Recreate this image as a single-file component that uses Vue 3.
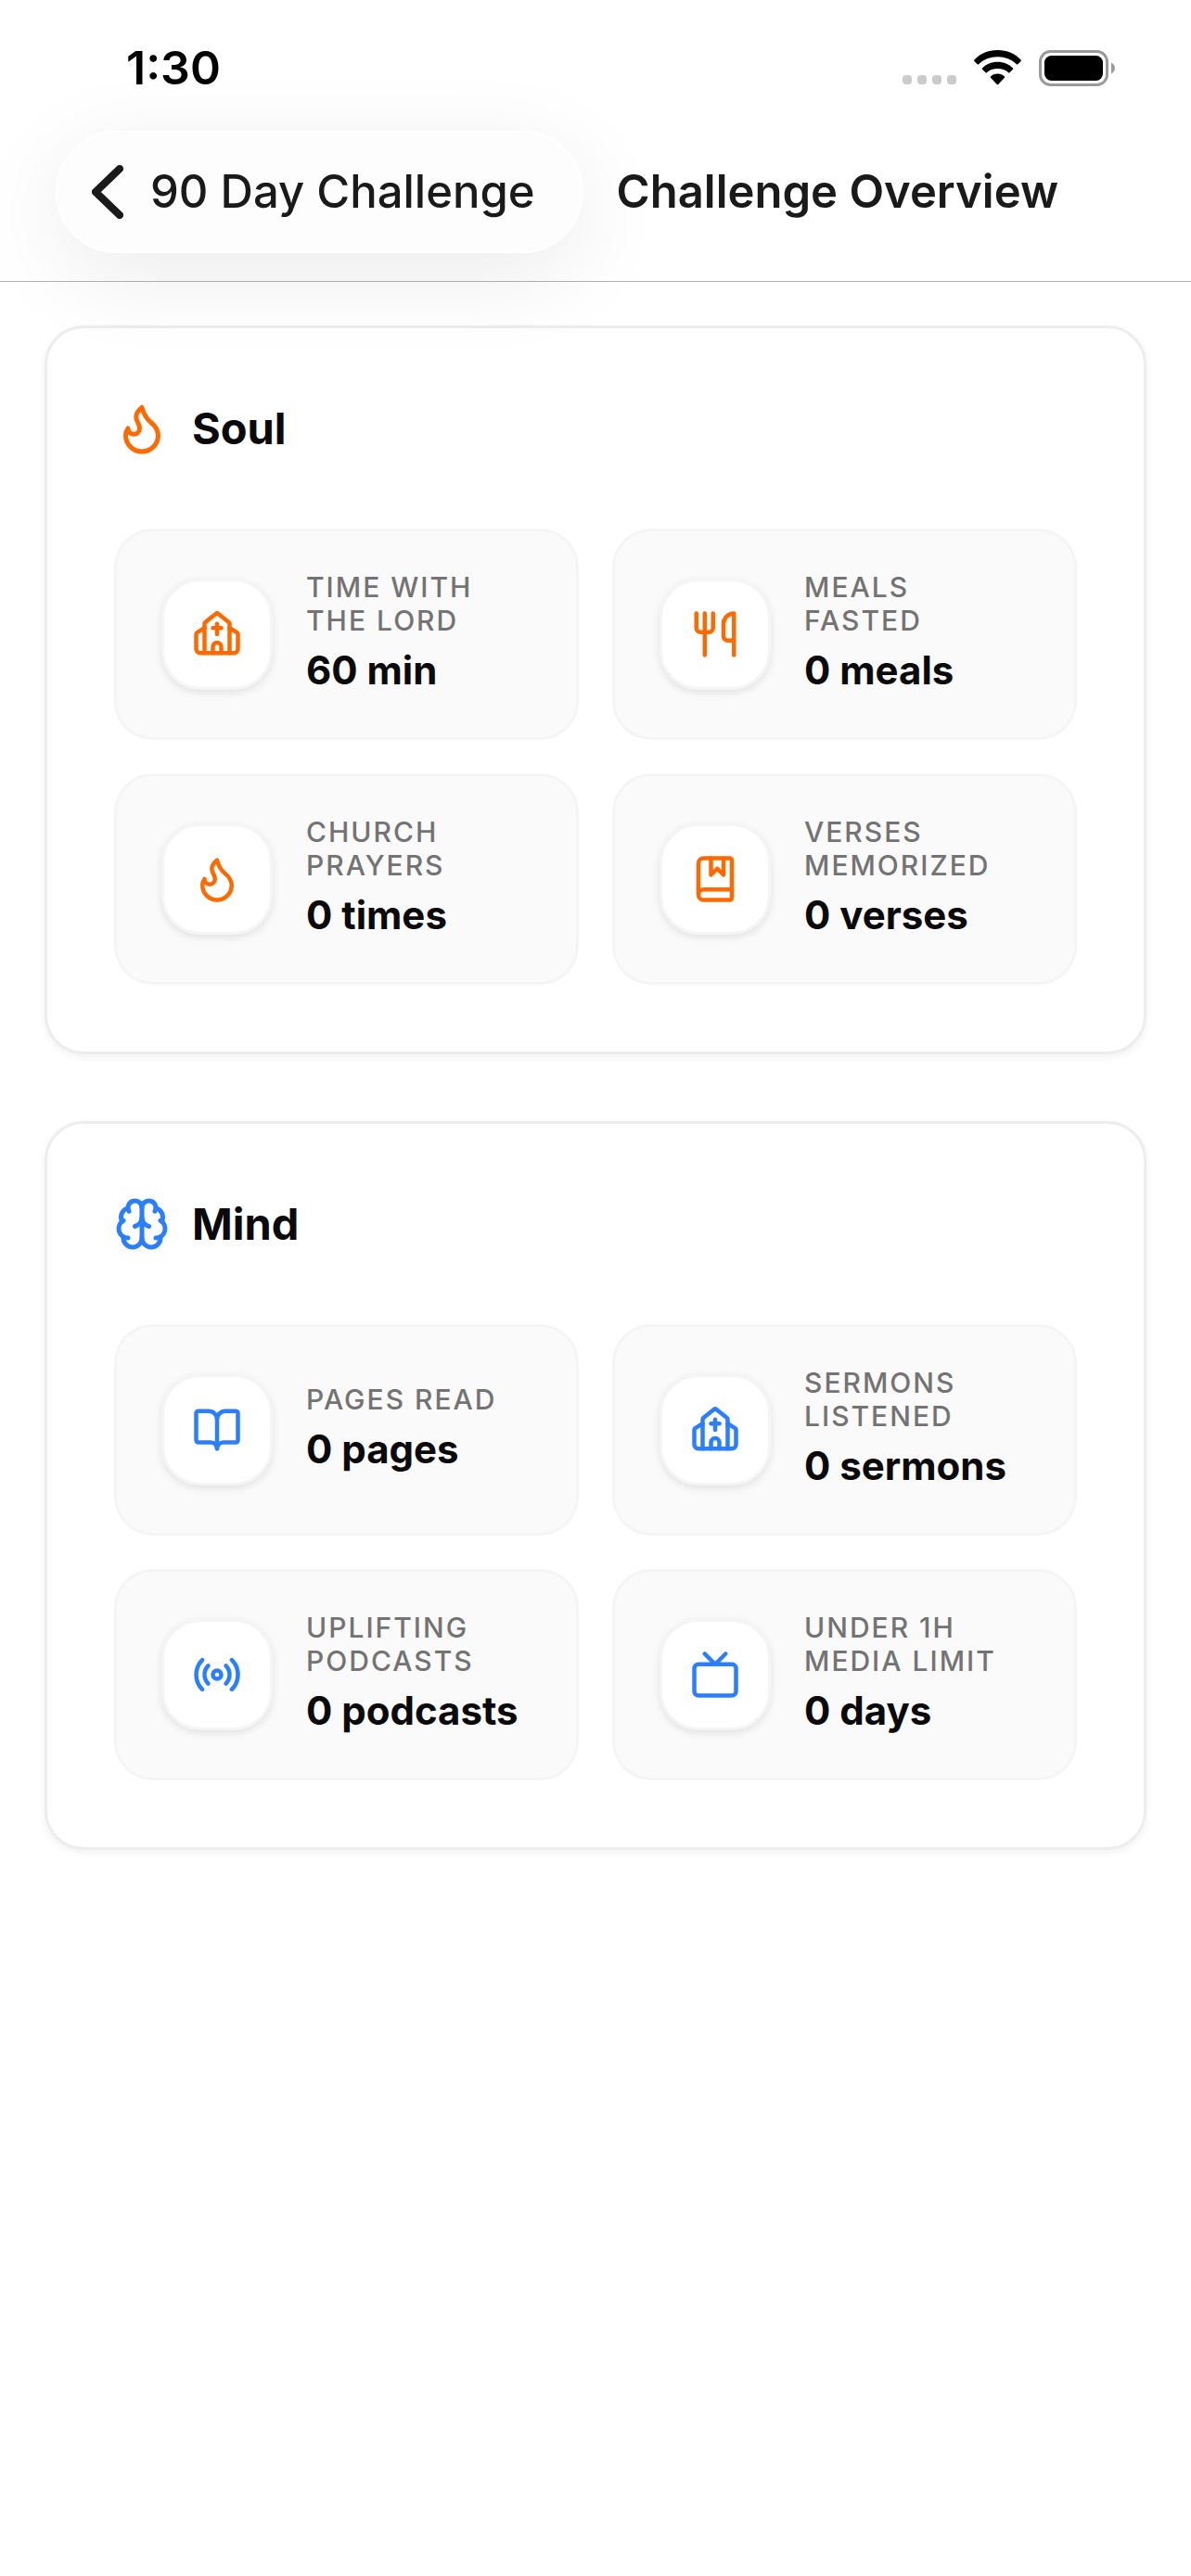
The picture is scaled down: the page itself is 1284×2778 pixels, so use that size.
<template>
  <div class="screen">
    <header class="top">
      <div class="status">
        <time class="clock">1:30</time>
        <div class="status-icons">
          <div class="signal">
            <span v-for="n in 4" :key="n" class="signal-dot"></span>
          </div>
          <svg class="wifi" viewBox="0 0 51 38" aria-hidden="true">
            <path d="M25.5 0C35.6 0 44.6 3.9 50.6 10.6Q51.2 11.3 50.6 12L47.3 15.2Q46.6 15.9 45.9 15.2C40.6 10.2 33.4 7.3 25.5 7.3S10.4 10.2 5.1 15.2Q4.4 15.9 3.7 15.2L.4 12Q-.2 11.3.4 10.6C6.4 3.9 15.4 0 25.5 0Z" />
            <path d="M25.5 12.8C32 12.8 37.8 15.3 42 19.4Q42.7 20.1 42 20.8L38.5 24.2Q37.8 24.9 37.1 24.2C34.1 21.6 30 20.1 25.5 20.1S16.9 21.6 13.9 24.2Q13.2 24.9 12.5 24.2L9 20.8Q8.3 20.1 9 19.4C13.2 15.3 19 12.8 25.5 12.8Z" />
            <path d="M25.5 25.6C28.5 25.6 31.2 26.7 33 28.4Q33.7 29.1 33 29.8L26.2 36.9Q25.5 37.6 24.8 36.9L18 29.8Q17.3 29.1 18 28.4C19.8 26.7 22.5 25.6 25.5 25.6Z" />
          </svg>
          <svg class="battery" viewBox="0 0 82 39" aria-hidden="true">
            <rect x="1.5" y="1.5" width="72" height="36" rx="11" fill="none" stroke="#9a9a9a" stroke-width="3" />
            <rect x="6" y="6" width="63" height="27" rx="7.5" />
            <path d="M78 13.5C80.5 14.8 82 17 82 19.5S80.5 24.2 78 25.5Z" fill="#9a9a9a" />
          </svg>
        </div>
      </div>
      <nav class="nav">
        <button type="button" class="back">
          <svg class="chevron" viewBox="0 0 34 58" aria-hidden="true">
            <path d="M30 4 4 29l26 25" />
          </svg>
          <span>90 Day Challenge</span>
        </button>
        <h1 class="title">Challenge Overview</h1>
      </nav>
    </header>

    <main class="content">
      <section
        v-for="section in sections"
        :key="section.name"
        class="card"
        :class="section.theme"
      >
        <h2 class="card-head">
          <svg class="icon head-icon" viewBox="0 0 24 24" aria-hidden="true">
            <path v-for="d in icons[section.icon]" :key="d" :d="d" />
          </svg>
          <span>{{ section.name }}</span>
        </h2>
        <div class="grid">
          <div v-for="stat in section.stats" :key="stat.label" class="tile">
            <div class="tile-icon">
              <svg class="icon" viewBox="0 0 24 24" aria-hidden="true">
                <path v-for="d in icons[stat.icon]" :key="d" :d="d" />
              </svg>
            </div>
            <div class="tile-text">
              <div class="label">{{ stat.label }}</div>
              <div class="value">{{ stat.value }}</div>
            </div>
          </div>
        </div>
      </section>
    </main>
  </div>
</template>

<script setup>
const icons = {
  flame: [
    'M12 3q1 4 4 6.5t3 5.5a1 1 0 0 1-14 0 5 5 0 0 1 1-3 1 1 0 0 0 5 0c0-2-1.5-3-1.5-5q0-2 2.5-4',
  ],
  brain: [
    'M12 18V5',
    'M15 13a4.17 4.17 0 0 1-3-4 4.17 4.17 0 0 1-3 4',
    'M17.598 6.5A3 3 0 1 0 12 5a3 3 0 1 0-5.598 1.5',
    'M17.997 5.125a4 4 0 0 1 2.526 5.77',
    'M18 18a4 4 0 0 0 2-7.464',
    'M19.967 17.483A4 4 0 1 1 12 18a4 4 0 1 1-7.967-.517',
    'M6 18a4 4 0 0 1-2-7.464',
    'M6.003 5.125a4 4 0 0 0-2.526 5.77',
  ],
  church: [
    'M10 9h4',
    'M12 7v5',
    'M14 21v-3a2 2 0 0 0-4 0v3',
    'm18 9 3.52 2.147a1 1 0 0 1 .48.854V19a2 2 0 0 1-2 2H4a2 2 0 0 1-2-2v-6.999a1 1 0 0 1 .48-.854L6 9',
    'M6 21V7a1 1 0 0 1 .376-.782l5-3.999a1 1 0 0 1 1.249.001l5 4A1 1 0 0 1 18 7v14',
  ],
  utensils: [
    'M3 2v7c0 1.1.9 2 2 2h4a2 2 0 0 0 2-2V2',
    'M7 2v20',
    'M21 15V2a5 5 0 0 0-5 5v6c0 1.1.9 2 2 2h3Zm0 0v7',
  ],
  bookMarked: [
    'M10 2v8l3-3 3 3V2',
    'M4 19.5v-15A2.5 2.5 0 0 1 6.5 2H19a1 1 0 0 1 1 1v18a1 1 0 0 1-1 1H6.5a1 1 0 0 1 0-5H20',
  ],
  bookOpen: [
    'M12 7v14',
    'M3 18a1 1 0 0 1-1-1V4a1 1 0 0 1 1-1h5a4 4 0 0 1 4 4 4 4 0 0 1 4-4h5a1 1 0 0 1 1 1v13a1 1 0 0 1-1 1h-6a3 3 0 0 0-3 3 3 3 0 0 0-3-3z',
  ],
  radio: [
    'M16.247 7.761a6 6 0 0 1 0 8.478',
    'M19.075 4.933a10 10 0 0 1 0 14.134',
    'M4.925 19.067a10 10 0 0 1 0-14.134',
    'M7.753 16.239a6 6 0 0 1 0-8.478',
    'M10 12a2 2 0 1 0 4 0 2 2 0 1 0-4 0',
  ],
  tv: [
    'm17 2-5 5-5-5',
    'M4 7h16a2 2 0 0 1 2 2v11a2 2 0 0 1-2 2H4a2 2 0 0 1-2-2V9a2 2 0 0 1 2-2z',
  ],
};

const sections = [
  {
    name: 'Soul',
    icon: 'flame',
    theme: 'soul',
    stats: [
      { icon: 'church', label: 'Time with the Lord', value: '60 min' },
      { icon: 'utensils', label: 'Meals fasted', value: '0 meals' },
      { icon: 'flame', label: 'Church prayers', value: '0 times' },
      { icon: 'bookMarked', label: 'Verses memorized', value: '0 verses' },
    ],
  },
  {
    name: 'Mind',
    icon: 'brain',
    theme: 'mind',
    stats: [
      { icon: 'bookOpen', label: 'Pages read', value: '0 pages' },
      { icon: 'church', label: 'Sermons listened', value: '0 sermons' },
      { icon: 'radio', label: 'Uplifting podcasts', value: '0 podcasts' },
      { icon: 'tv', label: 'Under 1h media limit', value: '0 days' },
    ],
  },
];
</script>

<style>
body { margin: 0; background: #fff; }
</style>

<style scoped>
.screen {
  min-height: 100vh; background: #fff; color: #0a0a0a;
  font-family: Inter, 'Liberation Sans', sans-serif;
}

/* above the cards, so the back button's shadow falls on them */
.top { position: relative; z-index: 1; border-bottom: 1px solid #b2b2b2; }
.status {
  display: flex; align-items: center; justify-content: space-between;
  padding: 43px 82px 38px 136px;
}
.clock { font-size: 50px; line-height: 60px; font-weight: 600; color: #000; }
.status-icons { display: flex; align-items: center; gap: 19px; }
.signal { display: flex; gap: 6px; align-self: flex-end; padding-bottom: 2px; }
.signal-dot { width: 10px; height: 10px; border-radius: 4px; background: #cbcbcb; }
.wifi { width: 51px; height: 38px; }
.battery { width: 82px; height: 39px; }

.nav {
  display: flex; align-items: center; gap: 36px;
  padding: 0 60px 30px;
}
.back {
  display: flex; align-items: center; gap: 29px;
  height: 132px; padding: 0 50px 0 37px;
  border: 2px solid #fff; border-radius: 66px; background: #fdfdfd;
  box-shadow: 0 24px 100px rgba(0, 0, 0, .08);
  font: 500 49px/60px Inter, 'Liberation Sans', sans-serif;
  color: #1a1a1a; white-space: nowrap;
}
.chevron {
  width: 34px; height: 58px; fill: none;
  stroke: currentColor; stroke-width: 8; stroke-linecap: round; stroke-linejoin: round;
}
.title {
  margin: 0; font-size: 49px; line-height: 60px; font-weight: 600;
  color: #1a1a1a; white-space: nowrap;
}

.content { display: grid; gap: 72px; padding: 47px 48px; }
.card {
  padding: 72px; border: 3px solid #ededed; border-radius: 42px; background: #fff;
  box-shadow: 0 3px 9px rgba(0, 0, 0, .06);
}
.card-head {
  display: flex; align-items: center; gap: 24px;
  margin: 0 0 72px; font-size: 47px; line-height: 72px; font-weight: 700;
}
.soul { --accent: #ff6900; }
.mind { --accent: #2b7fff; }
.icon {
  width: 54px; height: 54px; fill: none; stroke: var(--accent);
  stroke-width: 2; stroke-linecap: round; stroke-linejoin: round;
}
.head-icon { width: 60px; height: 60px; }

.grid { display: grid; grid-template-columns: 1fr 1fr; gap: 36px; }
.tile {
  display: flex; align-items: center; gap: 36px;
  min-height: 138px; padding: 42px 48px;
  border: 3px solid #f5f5f5; border-radius: 42px; background: #fafafa;
}
.tile-icon {
  flex: none; box-sizing: border-box; width: 120px; height: 120px;
  display: grid; place-items: center;
  border: 3px solid #f5f5f5; border-radius: 42px; background: #fff;
  box-shadow: 0 3px 9px rgba(0, 0, 0, .1);
}
.tile-text { min-width: 0; }
.label {
  font-size: 30px; line-height: 36px; font-weight: 500;
  letter-spacing: 2px; text-transform: uppercase; color: #737373;
}
.value { margin-top: 6px; font-size: 42px; line-height: 60px; font-weight: 700; white-space: nowrap; }
</style>
